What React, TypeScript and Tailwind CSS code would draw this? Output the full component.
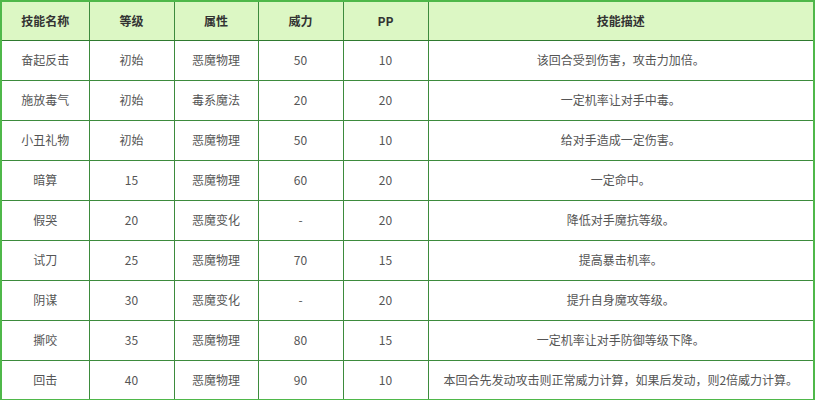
import React from 'react';

const rows = [
  ['奋起反击', '初始', '恶魔物理', '50', '10', '该回合受到伤害，攻击力加倍。'],
  ['施放毒气', '初始', '毒系魔法', '20', '20', '一定机率让对手中毒。'],
  ['小丑礼物', '初始', '恶魔物理', '50', '10', '给对手造成一定伤害。'],
  ['暗算', '15', '恶魔物理', '60', '20', '一定命中。'],
  ['假哭', '20', '恶魔变化', '-', '20', '降低对手魔抗等级。'],
  ['试刀', '25', '恶魔物理', '70', '15', '提高暴击机率。'],
  ['阴谋', '30', '恶魔变化', '-', '20', '提升自身魔攻等级。'],
  ['撕咬', '35', '恶魔物理', '80', '15', '一定机率让对手防御等级下降。'],
  ['回击', '40', '恶魔物理', '90', '10', '本回合先发动攻击则正常威力计算，如果后发动，则2倍威力计算。'],
];

const headers = ['技能名称', '等级', '属性', '威力', 'PP', '技能描述'];

export default function App() {
  return (
    <div
      className="w-[815px] h-[400px] bg-white overflow-hidden"
      style={{ fontFamily: '"Microsoft YaHei", "Noto Sans CJK SC", sans-serif' }}
    >
      <table className="w-[815px] table-fixed border-collapse border-2 border-[#4fb84a] text-[12px] text-[#555]">
        <colgroup>
          <col className="w-[88px]" />
          <col className="w-[85px]" />
          <col className="w-[84px]" />
          <col className="w-[85px]" />
          <col className="w-[85px]" />
          <col />
        </colgroup>
        <thead>
          <tr className="h-[39px] bg-[#dcf7c4]">
            {headers.map((h) => (
              <th
                key={h}
                className="border border-[#3d8b3d] border-b-[#2f7a2f] font-bold text-[#333] text-center"
              >
                {h}
              </th>
            ))}
          </tr>
        </thead>
        <tbody>
          {rows.map((r) => (
            <tr key={r[0]} className="h-[40px]">
              {r.map((c, i) => (
                <td key={i} className="border border-[#3d8b3d] text-center">
                  {c}
                </td>
              ))}
            </tr>
          ))}
        </tbody>
      </table>
    </div>
  );
}
